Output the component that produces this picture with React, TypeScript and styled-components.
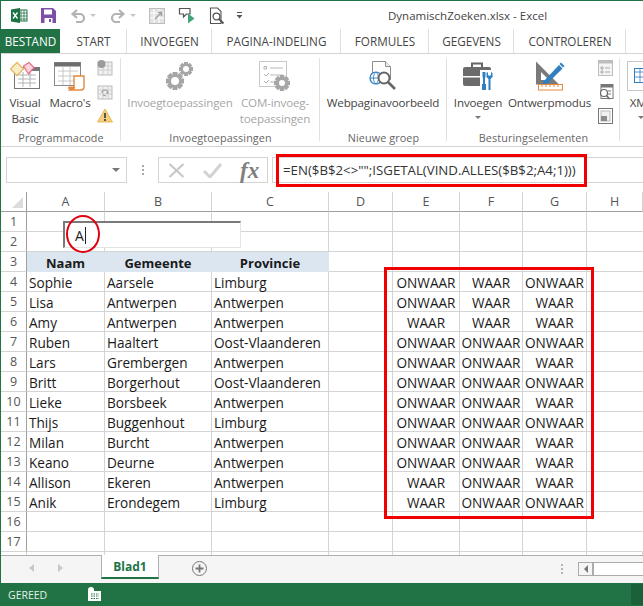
import React from "react";
import styled, { createGlobalStyle } from "styled-components";

const Global = createGlobalStyle`
  html, body { margin: 0; padding: 0; background: #fff; }
  #root { width: 643px; height: 606px; overflow: hidden; }
`;

const Page = styled.div`
  position: relative;
  width: 643px;
  height: 606px;
  box-sizing: border-box;
  display: flex;
  flex-direction: column;
  border-top: 1px solid #217346;
  border-left: 1px solid #217346;
  font-family: "Open Sans", "Liberation Sans", sans-serif;
  color: #444;
  overflow: hidden;
  background: #fff;
`;

const TitleBar = styled.div`
  height: 28px;
  flex: none;
  box-sizing: border-box;
  display: flex;
  align-items: center;
  padding: 1px 0 0 10px;
`;
const Qat = styled.div`
  display: flex;
  align-items: center;
  flex: none;
  width: 377px;
`;
const QatSlot = styled.span<{ $w: number }>`
  width: ${(p) => p.$w}px;
  flex: none;
  display: flex;
  align-items: center;
`;
const Title = styled.div`
  font-size: 11.5px;
  color: #444;
  white-space: nowrap;
`;

const Tabs = styled.div`
  height: 25px;
  flex: none;
  display: flex;
  align-items: stretch;
  border-bottom: 1px solid #d4d4d4;
  box-sizing: border-box;
`;
const FileTab = styled.div`
  width: 59px;
  margin-left: -1px;
  padding-left: 1px;
  background: #217346;
  color: #fff;
  font-size: 11.7px;
  display: flex;
  align-items: center;
  justify-content: center;
  flex: none;
`;
const Tab = styled.div<{ $w: number }>`
  width: ${(p) => p.$w}px;
  flex: none;
  font-size: 11.7px;
  color: #444;
  display: flex;
  align-items: center;
  justify-content: center;
  white-space: nowrap;
  position: relative;
  &:not(:last-child)::after {
    content: "";
    position: absolute;
    right: 0;
    top: 0;
    bottom: 0;
    width: 1px;
    background: #e1e1e1;
  }
`;

const Ribbon = styled.div`
  height: 93px;
  flex: none;
  box-sizing: border-box;
  display: flex;
  border-bottom: 1px solid #d4d4d4;
  padding-top: 2px;
`;
const Group = styled.div<{ $w: number }>`
  width: ${(p) => p.$w}px;
  flex: none;
  display: flex;
  flex-direction: column;
  align-items: center;
  position: relative;
  &:not(:last-child)::after {
    content: "";
    position: absolute;
    right: 0;
    top: 2px;
    bottom: 5px;
    width: 1px;
    background: #e1e1e1;
  }
`;
const GroupItems = styled.div`
  height: 74px;
  width: 100%;
  display: flex;
  justify-content: flex-start;
`;
const GroupLabel = styled.div`
  font-size: 10.8px;
  line-height: 15px;
  color: #666;
  letter-spacing: 0.1px;
  white-space: nowrap;
`;
const BigItem = styled.div<{ $w: number; $off?: boolean }>`
  width: ${(p) => p.$w}px;
  flex: none;
  display: flex;
  flex-direction: column;
  align-items: center;
  padding-top: 5px;
  font-size: 11.6px;
  letter-spacing: -0.15px;
  line-height: 16px;
  text-align: center;
  color: ${(p) => (p.$off ? "#a6a6a6" : "#444")};
  white-space: nowrap;
  svg { flex: none; margin-bottom: 4px; }
`;
const SmallCol = styled.div`
  width: 18px;
  flex: none;
  display: flex;
  flex-direction: column;
  gap: 8px;
  padding-top: 4px;
`;
const Caret = styled.div`
  width: 0;
  height: 0;
  margin-top: 5px;
  border-left: 3px solid transparent;
  border-right: 3px solid transparent;
  border-top: 3px solid #777;
`;
const Spacer = styled.div<{ $w: number }>`
  width: ${(p) => p.$w}px;
  flex: none;
`;

const FormulaRow = styled.div`
  height: 45px;
  flex: none;
  display: flex;
  align-items: center;
  padding: 1px 0 0 5px;
  box-sizing: border-box;
`;
const NameBox = styled.div`
  width: 121px;
  height: 26px;
  box-sizing: border-box;
  border: 1px solid #d4d4d4;
  display: flex;
  align-items: center;
  justify-content: flex-end;
  padding-right: 6px;
  flex: none;
`;
const NameCaret = styled.div`
  width: 0;
  height: 0;
  border-left: 4px solid transparent;
  border-right: 4px solid transparent;
  border-top: 4px solid #777;
`;
const Dots = styled.div`
  width: 31px;
  flex: none;
  display: flex;
  flex-direction: column;
  align-items: center;
  gap: 2px;
  & > i { width: 2px; height: 2px; background: #a8a8a8; display: block; }
`;
const FxBox = styled.div`
  width: 110px;
  height: 26px;
  box-sizing: border-box;
  border: 1px solid #d4d4d4;
  display: flex;
  align-items: center;
  flex: none;
  padding-left: 9px;
  gap: 18px;
`;
const FxGlyph = styled.span`
  font-family: "Liberation Serif", serif;
  font-style: italic;
  font-weight: 700;
  font-size: 23px;
  color: #7f7f7f;
  line-height: 1;
`;
const FormulaInput = styled.div`
  flex: 1;
  height: 26px;
  margin-left: 4px;
  box-sizing: border-box;
  border-top: 1px solid #d4d4d4;
  border-bottom: 1px solid #d4d4d4;
  border-left: 1px solid #d4d4d4;
  font-size: 13.25px;
  display: flex;
  align-items: center;
  padding-left: 10px;
  color: #333;
  white-space: nowrap;
`;

const Grid = styled.div`
  flex: none;
  display: grid;
  grid-template-columns: 26px 78px 107px 117px 64px 67px 63px 64px 56px;
  grid-template-rows: repeat(18, 20px) 3px;
  height: 363px;
  position: relative;
`;
const CornerCell = styled.div`
  border-right: 1px solid #9f9f9f;
  border-bottom: 1px solid #9f9f9f;
  box-sizing: border-box;
  position: relative;
  &::after {
    content: "";
    position: absolute;
    right: 3px;
    bottom: 3px;
    border-left: 11px solid transparent;
    border-bottom: 11px solid #dcdcdc;
  }
`;
const ColHead = styled.div`
  box-sizing: border-box;
  border-right: 1px solid #d4d4d4;
  border-bottom: 1px solid #9f9f9f;
  font-size: 12.5px;
  color: #555;
  display: flex;
  align-items: center;
  justify-content: center;
`;
const RowHead = styled.div`
  box-sizing: border-box;
  border-right: 1px solid #9f9f9f;
  border-bottom: 1px solid #d4d4d4;
  font-size: 12.5px;
  color: #555;
  display: flex;
  align-items: center;
  justify-content: center;
`;
const Cell = styled.div<{ $align?: string; $head?: boolean; $noRight?: boolean }>`
  box-sizing: border-box;
  border-right: 1px solid ${(p) => (p.$noRight || p.$head ? "transparent" : "#d4d4d4")};
  border-bottom: 1px solid ${(p) => (p.$head ? "transparent" : "#d4d4d4")};
  font-size: ${(p) => (p.$head ? 13 : 13.6)}px;
  color: #1a1a1a;
  font-weight: ${(p) => (p.$head ? 700 : 400)};
  background: ${(p) => (p.$head ? "#dce6f1" : "transparent")};
  display: flex;
  align-items: center;
  justify-content: ${(p) => p.$align || "flex-start"};
  padding-left: ${(p) => (p.$align ? 0 : 2)}px;
  padding-top: 2px;
  white-space: nowrap;
`;
const GridTail = styled.div`
  box-sizing: border-box;
  border-right: 1px solid #d4d4d4;
`;

const SearchBox = styled.div`
  position: absolute;
  left: 62px;
  top: 29px;
  width: 178px;
  height: 27px;
  box-sizing: border-box;
  background: #fff;
  border-top: 2px solid #7a7a7a;
  border-left: 2px solid #7a7a7a;
  border-right: 1px solid #e3e3e3;
  border-bottom: 1px solid #e3e3e3;
  font-size: 14px;
  color: #222;
  padding-left: 10px;
  display: flex;
  align-items: center;
`;
const Cursor = styled.span`
  display: inline-block;
  width: 1px;
  height: 17px;
  background: #222;
  margin-left: 1px;
`;
const RedCircle = styled.div`
  position: absolute;
  left: 65px;
  top: 214px;
  width: 34px;
  height: 38px;
  box-sizing: border-box;
  border: 2px solid #e0000e;
  border-radius: 50%;
`;
const RedFrame = styled.div<{ $x: number; $y: number; $w: number; $h: number }>`
  position: absolute;
  left: ${(p) => p.$x}px;
  top: ${(p) => p.$y}px;
  width: ${(p) => p.$w}px;
  height: ${(p) => p.$h}px;
  box-sizing: border-box;
  border: 3px solid #f00000;
  pointer-events: none;
`;

const SheetBar = styled.div`
  height: 28px;
  flex: none;
  background: #f5f5f5;
  border-top: 1px solid #aeaeae;
  box-sizing: border-box;
  display: flex;
  align-items: flex-start;
`;
const Arrows = styled.div`
  width: 100px;
  flex: none;
  height: 24px;
  display: flex;
  align-items: center;
  gap: 24px;
  padding-left: 28px;
  box-sizing: border-box;
`;
const ArrowL = styled.div`
  border-top: 4px solid transparent;
  border-bottom: 4px solid transparent;
  border-right: 5px solid #c8c8c8;
`;
const ArrowR = styled.div`
  border-top: 4px solid transparent;
  border-bottom: 4px solid transparent;
  border-left: 5px solid #c8c8c8;
`;
const SheetTab = styled.div`
  width: 58px;
  height: 24px;
  margin-top: -1px;
  flex: none;
  background: #fff;
  box-sizing: border-box;
  border-left: 1px solid #aeaeae;
  border-right: 1px solid #aeaeae;
  border-bottom: 2px solid #217346;
  color: #217346;
  font-size: 12px;
  font-weight: 700;
  display: flex;
  align-items: center;
  justify-content: center;
`;
const AddSheet = styled.div`
  margin-left: 33px;
  margin-top: 5px;
  flex: none;
  width: 15px;
  height: 15px;
  svg { display: block; }
`;
const Grip = styled.div`
  margin-left: 354px;
  margin-top: 8px;
  flex: none;
  display: flex;
  flex-direction: column;
  gap: 2px;
  & > i { width: 2px; height: 2px; background: #b4b4b4; display: block; }
`;
const Scroll = styled.div`
  margin-left: 15px;
  margin-top: 6px;
  flex: 1;
  height: 14px;
  box-sizing: border-box;
  border: 1px solid #ababab;
  border-right: 0;
  background: #fff;
  display: flex;
`;
const ScrollBtn = styled.div`
  width: 15px;
  box-sizing: border-box;
  background: #f5f5f5;
  border-right: 2px solid #ababab;
  display: flex;
  align-items: center;
  justify-content: center;
  &::before {
    content: "";
    border-top: 4px solid transparent;
    border-bottom: 4px solid transparent;
    border-right: 4px solid #777;
  }
`;

const StatusBar = styled.div`
  height: 23px;
  flex: none;
  margin-left: -1px;
  background: #217346;
  color: #e6f0ea;
  font-size: 10.5px;
  display: flex;
  align-items: center;
  padding-left: 8px;
  position: relative;
`;
const StatusIcon = styled.div`
  position: absolute;
  left: 88px;
  top: 4px;
  svg { display: block; }
`;
const StatusCorner = styled.div`
  position: absolute;
  right: 0;
  top: 1px;
  bottom: 1px;
  width: 12px;
  background: #1a6038;
`;

const ExcelLogo = () => (
  <svg width="17" height="15" viewBox="0 0 17 15">
    <rect x="7" y="2" width="9" height="11" fill="#fff" stroke="#217346" />
    <path d="M10 2v11M13 2v11M7 5h9M7 8h9M7 11h9" stroke="#217346" strokeWidth="0.8" />
    <path d="M0 1.500 9 0v15L0 13.500z" fill="#1e7145" />
    <path d="M2 4.500 6.500 10.500M6.500 4.500 2 10.500" stroke="#fff" strokeWidth="1.300" />
  </svg>
);
const SaveIcon = () => (
  <svg width="15" height="15" viewBox="0 0 15 15">
    <path d="M0 0h12l3 3v12H0z" fill="#7e4fa8" />
    <rect x="3" y="1.500" width="8" height="5" fill="#fff" />
    <rect x="3.500" y="10" width="8" height="5" fill="#fff" />
    <rect x="8" y="11" width="2" height="3" fill="#7e4fa8" />
  </svg>
);
const UndoIcon = ({ flip }: { flip?: boolean }) => (
  <svg width="16" height="14" viewBox="0 0 16 14" style={flip ? { transform: "scaleX(-1)" } : undefined}>
    <path d="M3 5h7a4 4 0 0 1 0 8H6" fill="none" stroke="#b3b3b3" strokeWidth="2.200" />
    <path d="M7 1 2.500 5 7 9" fill="none" stroke="#b3b3b3" strokeWidth="2.200" />
  </svg>
);
const TinyCaret = () => (
  <svg width="6" height="4" viewBox="0 0 6 4"><path d="M0 0h6L3 3z" fill="#c6c6c6" /></svg>
);
const GrayDocIcon = () => (
  <svg width="16" height="16" viewBox="0 0 16 16">
    <rect x=".5" y=".5" width="15" height="15" fill="#e2e2e2" stroke="#bdbdbd" />
    <path d="M1 5h14M1 10h14M5 1v14M10 1v14" stroke="#fff" />
    <path d="M6 11 12 5M9 4.500h3.500V8" fill="none" stroke="#9c9c9c" strokeWidth="1.400" />
  </svg>
);
const BubblePlay = () => (
  <svg width="18" height="18" viewBox="0 0 18 18">
    <path d="M1.500 1.500h10.500v5.500H8.500L5.500 10V7H1.500z" fill="#fff" stroke="#555" strokeWidth="1.200" />
    <path d="M10 6.500l6.500 5-6.500 5z" fill="#44a278" />
  </svg>
);
const DocSearch = () => (
  <svg width="17" height="18" viewBox="0 0 17 18">
    <path d="M1.500 1h7l3.500 3.500v12h-10.500z" fill="#fff" stroke="#555" strokeWidth="1.100" />
    <circle cx="7.500" cy="9.500" r="3.400" fill="#fff" stroke="#555" strokeWidth="1.300" />
    <path d="M10 12l4.500 4.500" stroke="#555" strokeWidth="1.800" />
  </svg>
);
const MoreIcon = () => (
  <svg width="7" height="7" viewBox="0 0 7 7">
    <path d="M1 0.500h5" stroke="#555" />
    <path d="M0.500 3h6L3.500 6.500z" fill="#555" />
  </svg>
);

const VbaIcon = () => (
  <svg width="30" height="30" viewBox="0 0 30 30">
    <rect x="4.500" y="6.500" width="25" height="21" fill="#fff" stroke="#777" />
    <rect x="22" y="6" width="8" height="4" fill="#777" />
    <path d="M8 14h18M8 18h18M8 22h18M13 11v15M20 11v15" stroke="#aaa" strokeWidth="0.900" />
    <path d="M.5 8 7 1.500 13.500 8 7 14.500z" fill="#f8ecc8" stroke="#e5bb63" strokeWidth="1.300" />
    <path d="M13.500 5 19 1.500 24 6.500 18.500 13z" fill="#fbd4db" stroke="#e5708c" strokeWidth="1.300" />
  </svg>
);
const MacroIcon = () => (
  <svg width="32" height="30" viewBox="0 0 32 30">
    <rect x=".5" y="1.500" width="26" height="23" fill="#fff" stroke="#8a8a8a" />
    <rect x=".5" y="1.500" width="26" height="4" fill="#6d6d6d" />
    <path d="M4 10h20M4 15h20M4 20h20M9 6v18M16 6v18" stroke="#c2c2c2" strokeWidth="0.900" />
    <path d="M20 15h10v11c0 2-1 3-3 3H16c1.500-1 2.500-1 4-3z" fill="#fff" stroke="#e58a3c" strokeWidth="1.400" />
    <path d="M16 29c-2 0-2.500-3-1-3.500h6c.5 2 -1 3.500-2 3.500z" fill="#e58a3c" />
  </svg>
);
const TinyGrid = ({ badge }: { badge?: boolean }) => (
  <svg width="16" height="16" viewBox="0 0 16 16">
    <rect x="1" y="2" width="14" height="13" fill="#f0f0f0" stroke="#bbb" />
    <path d="M1 6h14M1 10h14M6 2v13M11 2v13" stroke="#c9c9c9" strokeWidth="0.800" />
    {badge ? (
      <circle cx="4.500" cy="4" r="4" fill="#9b9b9b" />
    ) : (
      <path d="M5 9a3 3 0 0 1 6 0l-2 0M6 11l3 1" fill="none" stroke="#9b9b9b" strokeWidth="1.100" />
    )}
  </svg>
);
const WarnIcon = () => (
  <svg width="16" height="15" viewBox="0 0 16 15">
    <path d="M8 1 15.500 14H.5z" fill="#f4cf7d" stroke="#e7b95b" />
    <rect x="7" y="5" width="2" height="5" fill="#555" />
    <rect x="7" y="11" width="2" height="2" fill="#555" />
  </svg>
);
const Gear = ({ cx, cy, r, hole }: { cx: number; cy: number; r: number; hole: number }) => (
  <g>
    {[0, 45, 90, 135].map((a) => (
      <rect key={a} x={cx - r * 0.28} y={cy - r} width={r * 0.56} height={r * 2} fill="#a6a6a6" transform={`rotate(${a} ${cx} ${cy})`} />
    ))}
    <circle cx={cx} cy={cy} r={r * 0.76} fill="#a6a6a6" />
    <circle cx={cx} cy={cy} r={hole} fill="#fff" />
  </g>
);
const GearsIcon = () => (
  <svg width="28" height="30" viewBox="0 0 28 30">
    <Gear cx={20} cy={8} r={7} hole={3} />
    <Gear cx={9} cy={20} r={9} hole={4} />
  </svg>
);
const ComIcon = () => (
  <svg width="32" height="30" viewBox="0 0 32 30">
    <rect x=".5" y=".5" width="27" height="25" fill="#fff" stroke="#ccc6cf" />
    <path d="M5 5.500h2.500v2.500H5zM5 13l2 2 3-3M5 20l2 2 3-3" fill="none" stroke="#b3b3b3" />
    <path d="M11 7h13M11 14h13M11 21h6" stroke="#b9b9b9" />
    <Gear cx={23} cy={22} r={8} hole={3} />
  </svg>
);
const WebIcon = () => (
  <svg width="28" height="30" viewBox="0 0 28 30">
    <path d="M3.500 .5h13l5 5v13h-18z" fill="#fff" stroke="#8e8e8e" />
    <path d="M16.500 .5v5h5" fill="#f0f0f0" stroke="#8e8e8e" />
    <circle cx="7" cy="17" r="6" fill="#fff" stroke="#2f7fc1" strokeWidth="1.200" />
    <path d="M1 17h12M7 11c-3.500 3.500-3.500 8.500 0 12M7 11c3.500 3.500 3.500 8.500 0 12" fill="none" stroke="#2f7fc1" strokeWidth="0.900" />
    <circle cx="15" cy="17" r="5.500" fill="#fff" stroke="#666" strokeWidth="2" />
    <path d="M19 21l7 7" stroke="#666" strokeWidth="2.600" />
  </svg>
);
const ToolboxIcon = () => (
  <svg width="31" height="30" viewBox="0 0 31 30">
    <path d="M9 6V2.500h10V6" fill="none" stroke="#666" strokeWidth="2" />
    <rect x="0" y="6" width="28" height="19" rx="2" fill="#6b6b6b" />
    <rect x="0" y="15" width="28" height="1.500" fill="#fff" />
    <rect x="17" y="9" width="14" height="21" fill="#fff" />
    <path d="M19.500 11h3v4l-.5 3v6h-2v-6l-.5-3z" fill="#2f7fc1" />
    <rect x="19" y="23" width="4" height="6" fill="#2f7fc1" />
    <path d="M25 11v3l1.500 1 1.500-1v-3l1.500 1v4l-2 2v11h-2V18l-2-2v-4z" fill="#2f7fc1" />
  </svg>
);
const DesignIcon = () => (
  <svg width="30" height="30" viewBox="0 0 30 30">
    <path d="M1 .5v23h23zM6 11v8h8z" fill="#7a7a7a" fillRule="evenodd" />
    <path d="M8 21 24 4l3.500 3.500L11 24l-4 1z" fill="#2f7fc1" />
    <path d="M26 1.500l3.500 3.500-1.500 1.500-3.500-3.500z" fill="#2f7fc1" />
    <rect x="3.500" y="23.500" width="24" height="5.500" fill="#fff" stroke="#e58a3c" />
    <path d="M7 24v2M11 24v2M15 24v2M19 24v2M23 24v2" stroke="#e58a3c" />
  </svg>
);
const ListIcon = () => (
  <svg width="15" height="16" viewBox="0 0 15 16">
    <rect x=".5" y=".5" width="14" height="15" fill="#f4f4f4" stroke="#bdbdbd" />
    <rect x=".5" y=".5" width="14" height="3" fill="#bdbdbd" />
    <path d="M3 7h2v2H3zM3 11h2v2H3zM7 8h5M7 12h5" fill="none" stroke="#aaa" />
  </svg>
);
const PropIcon = () => (
  <svg width="16" height="16" viewBox="0 0 16 16">
    <rect x="3" y=".5" width="12" height="14" fill="#fff" stroke="#777" />
    <rect x="3" y=".5" width="12" height="3" fill="#777" />
    <path d="M10 7h3M10 10h3" stroke="#777" />
    <circle cx="6" cy="9" r="3.500" fill="#fff" stroke="#666" strokeWidth="1.200" />
    <path d="M8.500 11.500l3 3.500" stroke="#666" strokeWidth="1.500" />
  </svg>
);
const DialogIcon = () => (
  <svg width="15" height="16" viewBox="0 0 15 16">
    <rect x=".5" y=".5" width="14" height="15" fill="#fff" stroke="#777" />
    <rect x="3" y="3" width="9" height="10" fill="#f1f1f1" stroke="#bbb" />
    <rect x="3" y="8" width="6" height="5" fill="#8c8c8c" />
  </svg>
);
const XmlIcon = () => (
  <svg width="28" height="30" viewBox="0 0 28 30">
    <rect x=".5" y=".5" width="30" height="29" fill="#fff" stroke="#c6c6c6" />
    <rect x="7.500" y="7.500" width="20" height="14" fill="#fff" stroke="#2f7fc1" />
    <path d="M8 11h19M8 16h19M13 8v13" stroke="#2f7fc1" strokeWidth="0.800" />
  </svg>
);
const CrossIcon = () => (
  <svg width="17" height="15" viewBox="0 0 17 15"><path d="M1.500 1 15.500 14M15.500 1 1.500 14" stroke="#c8c8c8" strokeWidth="2.200" /></svg>
);
const CheckIcon = () => (
  <svg width="19" height="15" viewBox="0 0 19 15"><path d="M1 8l6 6L18 1" fill="none" stroke="#d2d2d2" strokeWidth="3" /></svg>
);
const PlusCircle = () => (
  <svg width="15" height="15" viewBox="0 0 15 15">
    <circle cx="7.500" cy="7.500" r="7" fill="none" stroke="#777" />
    <path d="M7.500 3.500v8M3.500 7.500h8" stroke="#777" strokeWidth="1.800" />
  </svg>
);
const StatusSheetIcon = () => (
  <svg width="13" height="14" viewBox="0 0 13 14">
    <circle cx="3" cy="3" r="3" fill="#fff" />
    <rect x="0" y="4" width="13" height="10" fill="#fff" />
    <path d="M3 7h8M3 9h8M3 11.500h8" stroke="#217346" strokeWidth="1" strokeDasharray="1.500 1" />
  </svg>
);

type Row = [string, string, string, string, string, string];
const rows: Row[] = [
  ["Sophie", "Aarsele", "Limburg", "ONWAAR", "WAAR", "ONWAAR"],
  ["Lisa", "Antwerpen", "Antwerpen", "ONWAAR", "WAAR", "WAAR"],
  ["Amy", "Antwerpen", "Antwerpen", "WAAR", "WAAR", "WAAR"],
  ["Ruben", "Haaltert", "Oost-Vlaanderen", "ONWAAR", "ONWAAR", "ONWAAR"],
  ["Lars", "Grembergen", "Antwerpen", "ONWAAR", "ONWAAR", "WAAR"],
  ["Britt", "Borgerhout", "Oost-Vlaanderen", "ONWAAR", "ONWAAR", "ONWAAR"],
  ["Lieke", "Borsbeek", "Antwerpen", "ONWAAR", "ONWAAR", "WAAR"],
  ["Thijs", "Buggenhout", "Limburg", "ONWAAR", "ONWAAR", "ONWAAR"],
  ["Milan", "Burcht", "Antwerpen", "ONWAAR", "ONWAAR", "WAAR"],
  ["Keano", "Deurne", "Antwerpen", "ONWAAR", "ONWAAR", "WAAR"],
  ["Allison", "Ekeren", "Antwerpen", "WAAR", "ONWAAR", "WAAR"],
  ["Anik", "Erondegem", "Limburg", "WAAR", "ONWAAR", "ONWAAR"],
];
const cols = ["A", "B", "C", "D", "E", "F", "G", "H"];

const blankRow = (n: number) => [
  <RowHead key={`h${n}`}>{n}</RowHead>,
  ...cols.map((c, i) => <Cell key={`${c}${n}`} $noRight={i === 7} />),
];

export default function App() {
  return (
    <Page>
      <Global />
      <TitleBar>
        <Qat>
          <QatSlot $w={30}><ExcelLogo /></QatSlot>
          <QatSlot $w={29}><SaveIcon /></QatSlot>
          <QatSlot $w={20}><UndoIcon /></QatSlot>
          <QatSlot $w={20}><TinyCaret /></QatSlot>
          <QatSlot $w={20}><UndoIcon flip /></QatSlot>
          <QatSlot $w={19}><TinyCaret /></QatSlot>
          <QatSlot $w={29}><GrayDocIcon /></QatSlot>
          <QatSlot $w={31}><BubblePlay /></QatSlot>
          <QatSlot $w={27}><DocSearch /></QatSlot>
          <QatSlot $w={20}><MoreIcon /></QatSlot>
        </Qat>
        <Title>DynamischZoeken.xlsx - Excel</Title>
      </TitleBar>
      <Tabs>
        <FileTab>BESTAND</FileTab>
        <Tab $w={67}>START</Tab>
        <Tab $w={85}>INVOEGEN</Tab>
        <Tab $w={129}>PAGINA-INDELING</Tab>
        <Tab $w={88}>FORMULES</Tab>
        <Tab $w={85}>GEGEVENS</Tab>
        <Tab $w={112}>CONTROLEREN</Tab>
        <Tab $w={128}>ONTWIKKELAARS</Tab>
      </Tabs>
      <Ribbon>
        <Group $w={120}>
          <GroupItems>
            <Spacer $w={8} />
            <BigItem $w={32}><VbaIcon /><span>Visual</span><span>Basic</span></BigItem>
            <Spacer $w={8} />
            <BigItem $w={42}><MacroIcon /><span>Macro's</span></BigItem>
            <Spacer $w={6} />
            <SmallCol><TinyGrid badge /><TinyGrid /><WarnIcon /></SmallCol>
          </GroupItems>
          <GroupLabel>Programmacode</GroupLabel>
        </Group>
        <Group $w={199}>
          <GroupItems>
            <Spacer $w={6} />
            <BigItem $w={106} $off><GearsIcon /><span>Invoegtoepassingen</span></BigItem>
            <Spacer $w={6} />
            <BigItem $w={72} $off><ComIcon /><span>COM-invoeg-</span><span>toepassingen</span></BigItem>
          </GroupItems>
          <GroupLabel>Invoegtoepassingen</GroupLabel>
        </Group>
        <Group $w={127}>
          <GroupItems>
            <Spacer $w={6} />
            <BigItem $w={114}><WebIcon /><span>Webpaginavoorbeeld</span></BigItem>
          </GroupItems>
          <GroupLabel>Nieuwe groep</GroupLabel>
        </Group>
        <Group $w={173}>
          <GroupItems>
            <Spacer $w={6} />
            <BigItem $w={50}><ToolboxIcon /><span>Invoegen</span><Caret /></BigItem>
            <Spacer $w={5} />
            <BigItem $w={83}><DesignIcon /><span>Ontwerpmodus</span></BigItem>
            <Spacer $w={7} />
            <SmallCol><ListIcon /><PropIcon /><DialogIcon /></SmallCol>
          </GroupItems>
          <GroupLabel>Besturingselementen</GroupLabel>
        </Group>
        <Group $w={24}>
          <GroupItems>
            <Spacer $w={7} />
            <BigItem $w={28}><XmlIcon /><span>XML</span><Caret /></BigItem>
          </GroupItems>
        </Group>
      </Ribbon>
      <FormulaRow>
        <NameBox><NameCaret /></NameBox>
        <Dots><i /><i /><i /></Dots>
        <FxBox><CrossIcon /><CheckIcon /><FxGlyph>fx</FxGlyph></FxBox>
        <FormulaInput>=EN($B$2&lt;&gt;"";ISGETAL(VIND.ALLES($B$2;A4;1)))</FormulaInput>
      </FormulaRow>
      <Grid>
        <CornerCell />
        {cols.map((c) => <ColHead key={c}>{c}</ColHead>)}
        {blankRow(1)}
        {blankRow(2)}
        <RowHead>3</RowHead>
        <Cell $head $align="center">Naam</Cell>
        <Cell $head $align="center">Gemeente</Cell>
        <Cell $head $align="center">Provincie</Cell>
        <Cell /><Cell /><Cell /><Cell /><Cell $noRight />
        {rows.map((r, i) => (
          <React.Fragment key={r[0]}>
            <RowHead>{i + 4}</RowHead>
            <Cell>{r[0]}</Cell>
            <Cell>{r[1]}</Cell>
            <Cell>{r[2]}</Cell>
            <Cell />
            <Cell $align="center">{r[3]}</Cell>
            <Cell $align="center">{r[4]}</Cell>
            <Cell $align="center">{r[5]}</Cell>
            <Cell $noRight />
          </React.Fragment>
        ))}
        {blankRow(16)}
        {blankRow(17)}
        <GridTail />
        {cols.map((c) => <GridTail key={c} />)}
        <SearchBox>A<Cursor /></SearchBox>
      </Grid>
      <SheetBar>
        <Arrows><ArrowL /><ArrowR /></Arrows>
        <SheetTab>Blad1</SheetTab>
        <AddSheet><PlusCircle /></AddSheet>
        <Grip><i /><i /><i /></Grip>
        <Scroll><ScrollBtn /></Scroll>
      </SheetBar>
      <StatusBar>
        GEREED
        <StatusIcon><StatusSheetIcon /></StatusIcon>
        <StatusCorner />
      </StatusBar>
      <RedFrame $x={275} $y={153} $w={311} $h={33} />
      <RedFrame $x={383} $y={266} $w={210} $h={252} />
      <RedCircle />
    </Page>
  );
}
